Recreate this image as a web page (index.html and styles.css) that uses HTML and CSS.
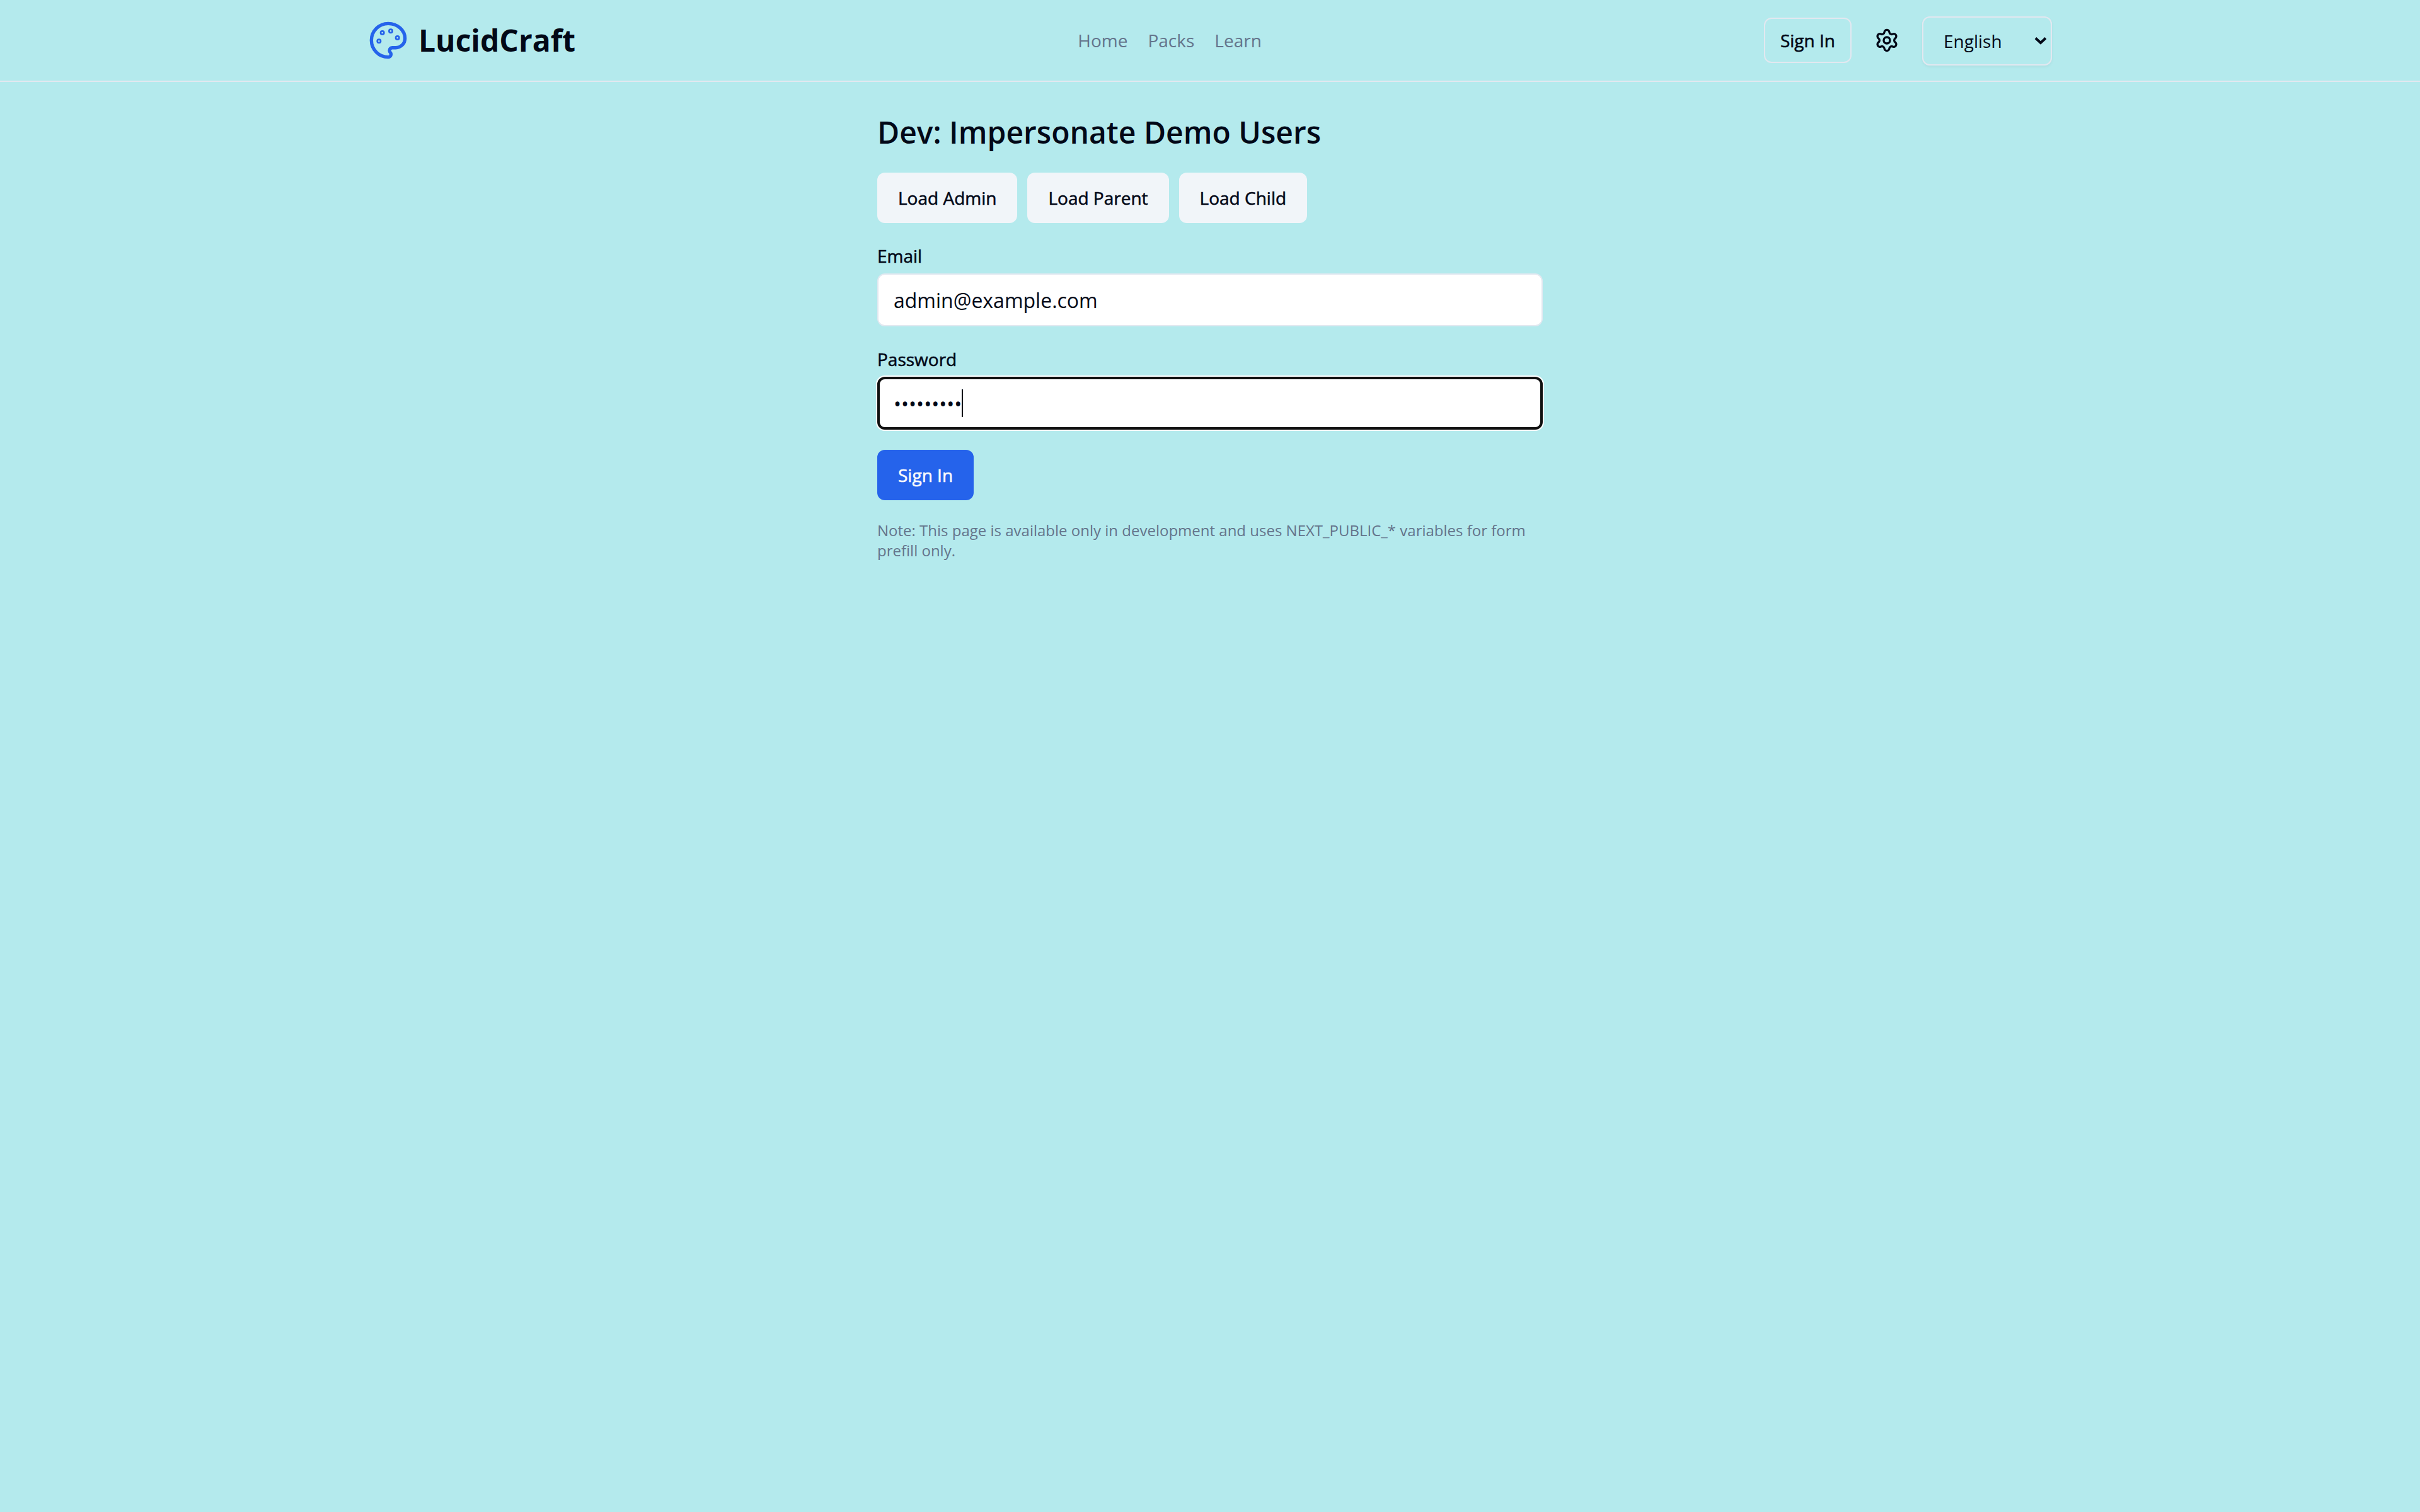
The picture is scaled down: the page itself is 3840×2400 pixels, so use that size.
FILE: index.html
```html
<!DOCTYPE html>
<html lang="en">
<head>
  <meta charset="utf-8">
  <meta name="viewport" content="width=device-width, initial-scale=1">
  <title>LucidCraft</title>
  <link rel="stylesheet" href="styles.css">
</head>
<body>
  <header class="site-header">
    <div class="header-inner">
      <a class="brand" href="#">
        <svg class="brand-icon" viewBox="0 0 24 24" fill="none" stroke="currentColor" stroke-width="2" stroke-linecap="round" stroke-linejoin="round" aria-hidden="true">
          <circle cx="13.5" cy="6.5" r=".5"/>
          <circle cx="17.5" cy="10.5" r=".5"/>
          <circle cx="8.5" cy="7.5" r=".5"/>
          <circle cx="6.5" cy="12.5" r=".5"/>
          <path d="M12 2C6.5 2 2 6.5 2 12s4.500 10 10 10c.926 0 1.648-.746 1.648-1.688 0-.437-.18-.835-.437-1.125-.29-.289-.438-.652-.438-1.125a1.640 1.640 0 0 1 1.668-1.668h1.996c3.051 0 5.555-2.503 5.555-5.554C21.965 6.012 17.461 2 12 2z"/>
        </svg>
        <span>LucidCraft</span>
      </a>
      <nav class="nav" aria-label="Main">
        <a class="nav-link" href="#">Home</a>
        <a class="nav-link" href="#">Packs</a>
        <a class="nav-link" href="#">Learn</a>
      </nav>
      <div class="actions">
        <button class="button button-outline" type="button">Sign In</button>
        <button class="button-icon" type="button" aria-label="Settings">
          <svg class="icon" viewBox="0 0 24 24" fill="none" stroke="currentColor" stroke-width="2" stroke-linecap="round" stroke-linejoin="round" aria-hidden="true">
            <path d="M9.671 4.136a2.34 2.34 0 0 1 4.659 0 2.34 2.34 0 0 0 3.319 1.915 2.34 2.34 0 0 1 2.33 4.033 2.34 2.34 0 0 0 0 3.831 2.34 2.34 0 0 1-2.33 4.033 2.34 2.34 0 0 0-3.319 1.915 2.34 2.34 0 0 1-4.659 0 2.34 2.34 0 0 0-3.32-1.915 2.34 2.34 0 0 1-2.33-4.033 2.34 2.34 0 0 0 0-3.831A2.34 2.34 0 0 1 6.35 6.051a2.34 2.34 0 0 0 3.319-1.915"/>
            <circle cx="12" cy="12" r="3"/>
          </svg>
        </button>
        <div class="language">
          <select class="language-select" aria-label="Language">
            <option selected>English</option>
            <option>Español</option>
          </select>
          <svg class="language-arrow" viewBox="0 0 20 14" fill="none" stroke="currentColor" stroke-width="4" aria-hidden="true">
            <path d="M2 2.500l8 7.500 8-7.500"/>
          </svg>
        </div>
      </div>
    </div>
  </header>

  <main class="page">
    <h1 class="title">Dev: Impersonate Demo Users</h1>
    <div class="presets">
      <button class="button button-secondary" type="button">Load Admin</button>
      <button class="button button-secondary" type="button">Load Parent</button>
      <button class="button button-secondary" type="button">Load Child</button>
    </div>
    <form class="form">
      <div class="field">
        <label class="label" for="email">Email</label>
        <input class="input" id="email" type="email" value="admin@example.com">
      </div>
      <div class="field">
        <label class="label" for="password">Password</label>
        <div class="input-wrap">
          <input class="input input-active" id="password" type="password" value="demo12345">
          <span class="caret" aria-hidden="true"></span>
        </div>
      </div>
      <button class="button button-primary" type="submit">Sign In</button>
    </form>
    <p class="note">Note: This page is available only in development and uses NEXT_PUBLIC_* variables for form prefill only.</p>
  </main>
</body>
</html>
```
FILE: styles.css
```css
:root {
  --background: #b4eaed;
  --foreground: #020817;
  --muted: #64748b;
  --border: #e2e8f0;
  --secondary: #f1f5f9;
  --primary: #2563eb;
  --radius: 12px;
}

*,
*::before,
*::after {
  box-sizing: border-box;
}

body {
  margin: 0;
  min-height: 100vh;
  background: var(--background);
  color: var(--foreground);
  font-family: "Open Sans", sans-serif;
  font-size: 32px;
  line-height: 48px;
}

button,
input,
select {
  margin: 0;
  color: inherit;
  font-family: inherit;
}

.site-header {
  border-bottom: 2px solid var(--border);
}

.header-inner {
  display: flex;
  align-items: center;
  justify-content: space-between;
  max-width: 2800px;
  margin: 0 auto;
  padding: 24px 64px;
}

.brand {
  display: flex;
  align-items: center;
  gap: 16px;
  color: inherit;
  font-size: 48px;
  font-weight: 700;
  line-height: 64px;
  text-decoration: none;
}

.brand-icon {
  width: 64px;
  height: 64px;
  color: var(--primary);
}

.nav {
  display: flex;
  gap: 32px;
}

.nav-link {
  color: var(--muted);
  font-size: 28px;
  line-height: 40px;
  text-decoration: none;
}

.actions {
  display: flex;
  align-items: center;
  gap: 16px;
}

/* Open Sans ships no medium cut, so a hairline stroke thickens the regular one */
.button,
.label {
  font-size: 28px;
  font-weight: 400;
  line-height: 40px;
  -webkit-text-stroke: 0.02em currentColor;
}

.button {
  height: 80px;
  padding: 0 33px;
  border: 0;
  border-radius: var(--radius);
  white-space: nowrap;
}

.button-outline {
  height: 72px;
  padding: 0 24px;
  border: 2px solid var(--border);
  background: transparent;
}

.button-secondary {
  background: var(--secondary);
}

.button-primary {
  align-self: flex-start;
  background: var(--primary);
  color: #f8fafc;
}

.button-icon {
  display: flex;
  align-items: center;
  justify-content: center;
  width: 80px;
  height: 80px;
  padding: 0;
  border: 0;
  background: transparent;
}

.icon {
  width: 40px;
  height: 40px;
}

.language {
  position: relative;
  align-self: flex-end;
}

.language-select {
  display: block;
  width: 206px;
  height: 78px;
  padding: 0 32px;
  appearance: none;
  border: 2px solid var(--border);
  border-radius: var(--radius);
  background: transparent;
  box-shadow: 0 2px 4px rgba(0, 0, 0, 0.05);
  font-size: 28px;
}

.language-arrow {
  position: absolute;
  top: 32px;
  right: 8px;
  width: 20px;
  height: 14px;
  pointer-events: none;
}

.page {
  display: flex;
  flex-direction: column;
  gap: 32px;
  max-width: 1152px;
  margin: 0 auto;
  padding: 48px;
}

.title {
  margin: 0;
  font-size: 48px;
  font-weight: 600;
  line-height: 64px;
}

.presets {
  display: flex;
  flex-wrap: wrap;
  gap: 16px;
}

.form {
  display: flex;
  flex-direction: column;
  gap: 32px;
}

.field {
  display: flex;
  flex-direction: column;
  gap: 8px;
}

.input-wrap {
  position: relative;
}

.input {
  display: block;
  width: 100%;
  height: 84px;
  padding: 0 24px;
  border: 2px solid var(--border);
  border-radius: var(--radius);
  background: #fff;
  font-size: 32px;
}

.input-active {
  padding: 0 22px;
  border: 4px solid #101010;
  box-shadow: 0 0 0 2px #fff;
}

.caret {
  position: absolute;
  top: 20px;
  left: 134px;
  width: 2px;
  height: 44px;
  background: var(--foreground);
}

.note {
  margin: 0;
  color: var(--muted);
  font-size: 24px;
  line-height: 32px;
}
```
